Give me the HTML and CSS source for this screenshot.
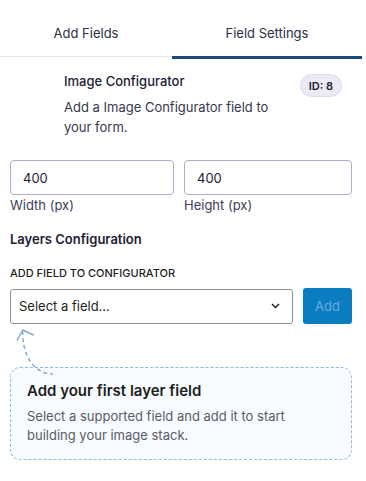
FILE: index.html
```html
<!DOCTYPE html>
<html lang="en">
<head>
<meta charset="utf-8">
<title>Field Settings</title>
<link rel="stylesheet" href="styles.css">
</head>
<body>
<div class="panel">
  <nav class="tabs">
    <div class="tab">Add Fields</div>
    <div class="tab active">Field Settings</div>
  </nav>

  <header class="field-head">
    <div class="field-info">
      <div class="field-title">Image Configurator</div>
      <p class="field-desc">Add a Image Configurator field to your form.</p>
    </div>
    <span class="id-badge">ID: 8</span>
  </header>

  <div class="dims">
    <label class="dim">
      <input class="text-input" type="text" value="400">
      <span class="dim-label">Width (px)</span>
    </label>
    <label class="dim">
      <input class="text-input" type="text" value="400">
      <span class="dim-label">Height (px)</span>
    </label>
  </div>

  <h3 class="section-title">Layers Configuration</h3>
  <div class="caps-label">ADD FIELD TO CONFIGURATOR</div>
  <div class="add-row">
    <div class="select">
      <span>Select a field...</span>
      <svg class="chev" width="9" height="6" viewBox="0 0 9 6"><path d="M1 1l3.5 3.5L8 1" fill="none" stroke="#1e1e1e" stroke-width="1.4"/></svg>
    </div>
    <button class="add-btn" type="button">Add</button>
  </div>

  <div class="empty-wrap">
    <svg class="hint-arrow" width="50" height="55" viewBox="0 0 50 55">
      <path d="M12.7 6 C 12 30, 24 49, 43 49" fill="none" stroke="#80abd9" stroke-width="1.5" stroke-dasharray="4 3"/>
      <path d="M7.3 15 L12.7 5 L23.3 10" fill="none" stroke="#80abd9" stroke-width="1.5" stroke-linecap="round" stroke-linejoin="round"/>
    </svg>
    <div class="empty-box">
      <div class="empty-title">Add your first layer field</div>
      <p class="empty-text">Select a supported field and add it to start building your image stack.</p>
    </div>
  </div>
</div>
</body>
</html>
```

FILE: styles.css
```css
* { box-sizing: border-box; }
body {
  margin: 0;
  background: #fff;
  font-family: Inter, "Noto Sans", sans-serif;
  color: #1e2033;
}
.panel {
  width: 366px;
}
.tabs {
  display: flex;
  width: 362px;
  height: 57px;
  border-bottom: 1px solid #e6e6f0;
}
.tab {
  flex: 1 1 auto;
  display: flex;
  align-items: center;
  justify-content: center;
  font-size: 13px;
  color: #2b2e45;
  position: relative;
  padding-top: 10px;
}
.tab.active::after {
  content: "";
  position: absolute;
  left: 0;
  right: 0;
  bottom: -3px;
  height: 3px;
  background: #1f4a74;
}
.field-head {
  display: flex;
  align-items: flex-start;
  padding: 14px 24px 0 64px;
  gap: 14px;
}
.field-info {
  flex: 1;
}
.field-title {
  font-size: 13px;
  font-weight: 500;
  line-height: 20px;
  color: #1e2033;
}
.field-desc {
  margin: 6px 0 0;
  font-size: 13px;
  line-height: 20px;
  color: #353850;
}
.id-badge {
  margin-top: 3px;
  height: 23px;
  padding: 0 8px;
  display: inline-flex;
  align-items: center;
  border-radius: 12px;
  background: #ebebf6;
  border: 1px solid #dcdcef;
  font-size: 11px;
  font-weight: 600;
  color: #1e2033;
}
.dims {
  display: grid;
  grid-template-columns: 164fr 168fr;
  gap: 10px;
  padding: 0 14px 0 10px;
  margin-top: 23px;
}
.dim {
  display: flex;
  flex-direction: column;
}
.text-input {
  height: 35px;
  width: 100%;
  border: 1px solid #aeabcf;
  border-radius: 4px;
  padding: 0 12px;
  font: 13px Inter, sans-serif;
  color: #1e2033;
  background: #fff;
}
.dim-label {
  font-size: 13px;
  line-height: 18px;
  color: #3d4058;
  margin-top: 1px;
}
.section-title {
  margin: 15px 10px 0;
  font-size: 13px;
  font-weight: 600;
  line-height: 20px;
  color: #1e2033;
}
.caps-label {
  margin: 16px 10px 0;
  font-size: 11px;
  font-weight: 500;
  line-height: 16px;
  color: #1e1e1e;
}
.add-row {
  display: flex;
  align-items: center;
  gap: 10px;
  padding: 0 14px 0 10px;
  margin-top: 7px;
}
.select {
  flex: 1;
  height: 35px;
  display: flex;
  align-items: center;
  justify-content: space-between;
  padding: 0 9px 0 8px;
  border: 1px solid #8c8f94;
  border-radius: 3px;
  font-size: 13px;
  color: #1e1e1e;
}
.chev { margin-right: 3px; }
.add-btn {
  width: 49px;
  height: 36px;
  border: 0;
  border-radius: 3px;
  background: #0a7cc0;
  color: #6faad8;
  font: 13px Inter, sans-serif;
}
.empty-wrap {
  position: relative;
  margin: 43px 14px 0 10px;
}
.hint-arrow {
  position: absolute;
  left: 0;
  top: -42px;
}
.empty-box {
  border: 1px dashed #94b7dd;
  border-radius: 10px;
  background: #f8fbff;
  padding: 13px 16px 14px 16px;
}
.empty-title {
  font-size: 15px;
  font-weight: 600;
  line-height: 20px;
  color: #1e1e1e;
}
.empty-text {
  margin: 6px 0 0;
  font-size: 13px;
  line-height: 19px;
  color: #595c66;
}
```
